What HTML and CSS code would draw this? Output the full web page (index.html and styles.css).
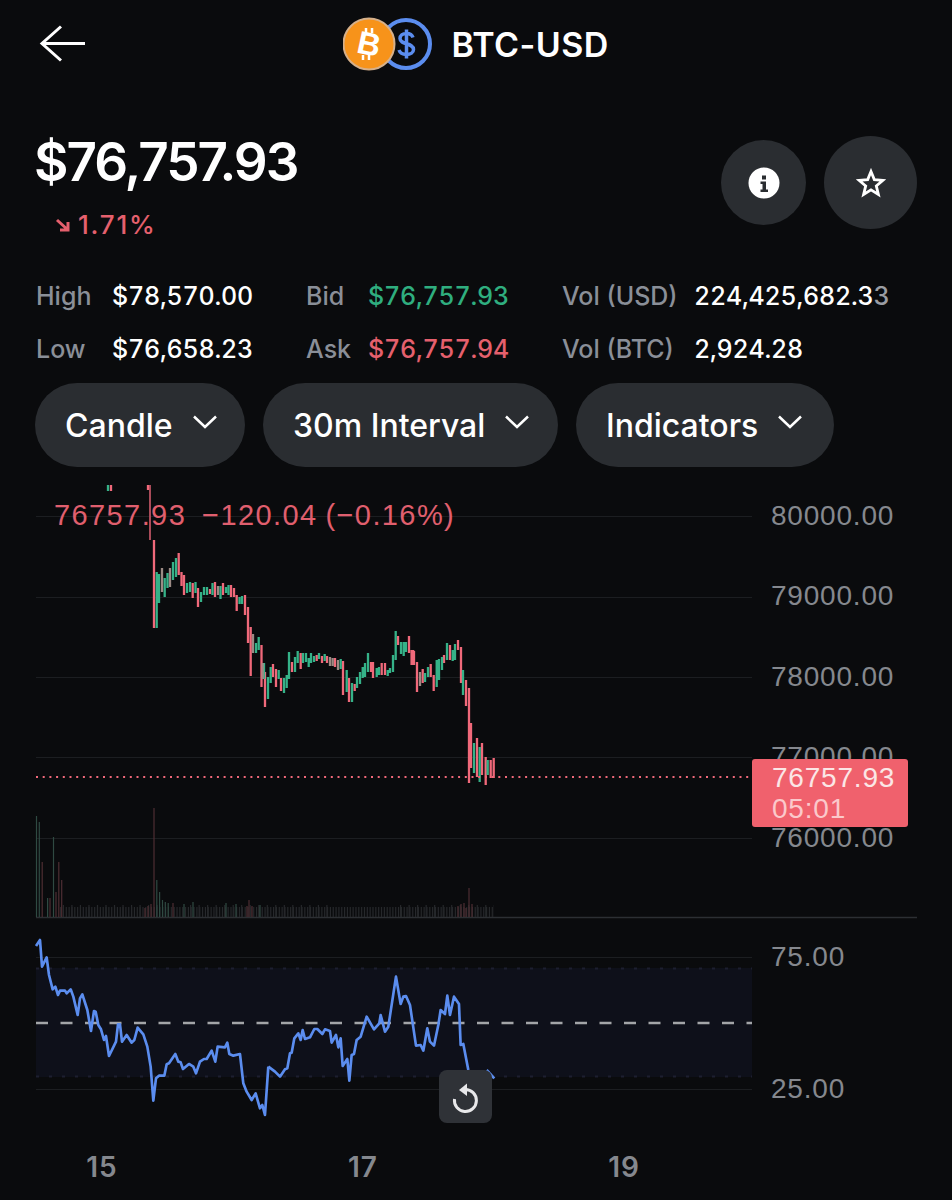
FILE: index.html
```html
<!DOCTYPE html>
<html lang="en">
<head>
<meta charset="utf-8">
<title>BTC-USD</title>
<link rel="stylesheet" href="styles.css">
</head>
<body>
<main class="app">
  <header class="topbar">
    <button class="back" aria-label="Back">
      <svg width="48" height="38" viewBox="0 0 48 38"><path class="line-white" d="M46 18.500H3M22 1.500L3 18.500L22 35.500"/></svg>
    </button>
    <div class="pair">
      <svg class="pair-icon" width="90" height="54" viewBox="0 0 90 54">
        <circle class="usd-ring" cx="63" cy="27" r="24"/>
        <path class="usd-glyph" d="M70 20.500C69 17.500 66.500 16.500 63.500 16.500C59.500 16.500 57 18.500 57 21.500C57 28 70.500 25.500 70.500 32.500C70.500 35.500 67.500 37.500 63.500 37.500C59.500 37.500 57 36 56 33M63.500 12.500V41.500"/>
        <circle class="btc-disc" cx="26" cy="27" r="25.500"/>
        <text class="btc-glyph" x="26" y="38" transform="rotate(12 26 27)">B</text>
        <path class="btc-ticks" d="M23 11V16M29 11V16M20 38V43M26 38V43"/>
      </svg>
      <span class="pair-name">BTC-USD</span>
    </div>
    <span></span>
  </header>

  <section class="summary">
    <div class="quote">
      <div class="price">$76,757.93</div>
      <div class="change">
        <svg width="16" height="14" viewBox="0 0 16 14"><path class="line-red" d="M2 2L13 12M13 4V12H5"/></svg>
        <span>1.71%</span>
      </div>
    </div>
    <div class="actions">
      <button class="round round-info" aria-label="Info">
        <svg width="32" height="32" viewBox="0 0 32 32"><circle class="fill-white" cx="16" cy="16" r="15.500"/><path class="info-cut" d="M14 8.500h4v4h-4zM12.500 14.500h5.500v8h2v2.500h-7.500v-2.500h2v-5.500h-2z"/></svg>
      </button>
      <button class="round round-star" aria-label="Favourite">
        <svg width="30" height="30" viewBox="0 0 30 30"><path class="line-star" d="M15 3.500L18.300 11.600L27 12.300L20.300 17.900L22.400 26.500L15 21.900L7.600 26.500L9.700 17.900L3 12.300L11.700 11.600Z"/></svg>
      </button>
    </div>
  </section>

  <section class="stats">
    <span class="label">High</span><span class="value">$78,570.00</span>
    <span class="label">Bid</span><span class="value up">$76,757.93</span>
    <span class="label">Vol (USD)</span><span class="value">224,425,682.3<span class="fade">3</span></span>
    <span class="label">Low</span><span class="value">$76,658.23</span>
    <span class="label">Ask</span><span class="value down">$76,757.94</span>
    <span class="label">Vol (BTC)</span><span class="value">2,924.28</span>
  </section>

  <nav class="filters">
    <button class="pill pill-candle">Candle <svg width="26" height="16" viewBox="0 0 26 16"><path class="line-white-thin" d="M2 2.500L13 13L24 2.500"/></svg></button>
    <button class="pill pill-interval">30m Interval <svg width="26" height="16" viewBox="0 0 26 16"><path class="line-white-thin" d="M2 2.500L13 13L24 2.500"/></svg></button>
    <button class="pill pill-indicators">Indicators <svg width="26" height="16" viewBox="0 0 26 16"><path class="line-white-thin" d="M2 2.500L13 13L24 2.500"/></svg></button>
  </nav>

  <section class="chart">
    <svg class="chart-svg" width="952" height="720" viewBox="0 480 952 720">
      <path class="grid" d="M36 516.500H752M36 597.500H752M36 677.500H752M36 757.500H752M36 838.500H752M36 957.500H752M36 1089.500H752"/>
      <path class="axis" d="M36 917.500H917"/>

      <rect class="rsi-band" x="36" y="968" width="716" height="109"/>
      <path class="rsi-edge" d="M36 968.500H752M36 1076.500H752"/>
      <path class="rsi-mid" d="M36 1023H752"/>

      <path class="vol-base" d="M60 912H494"/>
      <path class="vol-base2" d="M62.800 911H160M190 911H330M400 911H494"/>
      <path class="vol-green" d="M36.500 917V816M39.300 917V822M53.500 917V837M47.600 917V898M156.800 917V880M159.600 917V892M162.500 917V900M165.300 917V902M168.200 917V903M184 917V904M193 917V902M226 917V903M236 917V904M260 917V905"/>
      <path class="vol-red" d="M42.200 917V862M50 917V898M56 917V892M58.800 917V862M61.700 917V880M154 917V808M151 917V904M148 917V906M145 917V908M173 917V903M247 917V906M249 917V900M252 917V906M469 917V888M458 917V906M461 917V904M464 917V903M466 917V908M472 917V904"/>

      <path class="candle-dim" d="M150 485V540"/>
      <path class="candle-red" d="M154 540V628M111 485V491M148 490V485M178.700 553V575M181.500 572V586M184 575V595M192.700 583V598M198 588V607M210 589V594M215 582V597M223 583V595M231 585V597M234 588V597M236.700 595V611M245 595V615M248 607V643M250.700 627V676M261.500 645V687M265 672V707M273 664V677M276 669V687M281 678V691M292 662V672M300.700 653V669M316.700 655V661M322 656V663M327 656V663M335 658V667M343 661V695M349 678V702M354.700 684V691M371 662V672M373 662V678M381.700 663V675M385 663V675M398 636V645M409 636V653M411.700 650V665M414 651V665M417 662V692M422.700 669V683M430.700 664V677M433.700 675V691M444 655V663M450 645V660M458 640V650M461 647V683M466 680V706M469 688V783M471 723V768M477 738V777M482 743V775M485.700 757V785M490.700 760V778M493.700 758V778"/>
      <path class="candle-red-wide" d="M372 662V672M412.500 650V665M470 723V768"/>
      <path class="candle-green" d="M156.700 572V628M159 574V603M164.700 578V597M167.500 573V588M173 562V580M176 558V577M187 583V593M190 582V592M195.500 582V593M201 592V602M204 587V595M207 587V595M212.500 583V595M220.500 586V599M226 587V593M228.500 585V595M239.500 597V604M242 596V604M256 643V653M258.700 637V650M264 663V679M268 677V699M270.700 667V683M278.700 670V679M284 678V693M286.700 675V688M289 652V679M295 657V672M297.700 651V663M303 653V663M306 653V662M308.700 658V667M311 653V663M314 656V662M319 653V659M324.700 654V661M340.700 659V669M346.700 670V692M352 683V702M357 677V688M360 672V684M362.700 667V678M365 663V677M368 653V672M376.700 668V677M379 667V675M387.700 670V676M390 668V673M393 655V672M395.700 631V660M401 642V654M403.700 642V656M406 642V652M425 673V682M428 667V677M436.700 660V687M439 659V680M442 657V670M447 643V660M452.700 650V661M455 644V660M463 670V695M474 743V773M479.700 747V782M487.700 760V775M108 485V491"/>
      <path class="candle-mute" d="M162 568V592M170 568V587M218 586V595M253 634V653M262.700 663V679M330 657V666M332.700 658V666M338 660V670M420 672V686"/>

      <path class="last-line" d="M36 777H752"/>

      <polyline class="rsi-line" transform="translate(30 930) scale(0.3333)" points="18,48 30,30 36,110 50,82 57,135 68,178 76,170 84,195 90,182 105,182 110,190 122,178 130,200 143,255 150,205 157,193 172,240 183,303 192,243 197,245 205,285 213,298 222,330 228,318 237,378 258,335 264,283 270,283 276,335 290,315 305,338 313,330 323,293 340,313 352,350 362,410 370,512 378,445 387,437 403,437 410,403 417,400 436,372 445,395 452,397 459,417 477,402 490,410 498,430 510,395 522,387 530,387 545,362 556,395 563,350 585,352 592,338 598,372 610,377 630,372 640,460 650,485 665,510 677,490 690,535 697,525 705,555 715,410"/>
      <polyline class="rsi-line" transform="translate(260 930) scale(0.3333)" points="25,410 45,425 60,440 75,418 82,415 90,370 95,368 103,325 115,310 122,330 128,300 135,327 150,322 163,297 172,297 187,312 195,298 210,303 215,338 228,315 235,352 242,325 248,408 262,387 268,452 275,375 282,372 290,330 302,320 320,260 342,298 358,280 362,255 375,305 385,290 408,140 422,222 430,200 438,198 450,225 468,347 482,345 490,362 502,295 510,335 522,347 535,285 542,240 555,252 562,197 570,255 582,200 597,222 602,345 610,342 625,420"/>
      <polyline class="rsi-line" transform="translate(260 930) scale(0.3333)" points="680,420 703,445"/>

      <text class="legend" x="54" y="525">76757.93  −120.04 (−0.16%)</text>

      <text class="tick" x="771" y="525">80000.00</text>
      <text class="tick" x="771" y="605">79000.00</text>
      <text class="tick" x="771" y="686">78000.00</text>
      <text class="tick" x="771" y="766">77000.00</text>
      <text class="tick" x="771" y="847">76000.00</text>
      <text class="tick" x="771" y="966">75.00</text>
      <text class="tick" x="771" y="1098">25.00</text>

      <rect class="tag" x="752" y="759" width="156" height="68" rx="3"/>
      <text class="tag-price" x="772" y="787">76757.93</text>
      <text class="tag-time" x="772" y="818">05:01</text>

      <text class="day" x="102" y="1177">15</text>
      <text class="day" x="363" y="1177">17</text>
      <text class="day" x="624" y="1177">19</text>

      <rect class="reset" x="439" y="1070" width="53" height="53" rx="8"/>
      <path class="reset-arc" d="M465 1089.500A11 11 0 1 1 454.500 1099"/>
      <path class="reset-head" d="M467 1083.500V1096L459 1090Z"/>
    </svg>
  </section>
</main>
</body>
</html>
```
FILE: styles.css
```css
* { box-sizing: border-box; }
html, body { margin: 0; padding: 0; background: #0a0b0d; }
body { font-family: "Inter", "Liberation Sans", sans-serif; color: #fff; }
button { font: inherit; color: inherit; border: 0; padding: 0; background: none; }
svg { display: block; }

.app { width: 952px; height: 1200px; overflow: hidden; display: flex; flex-direction: column; background: #0a0b0d; }

.topbar { height: 90px; display: grid; grid-template-columns: 1fr auto 1fr; align-items: center; padding: 0 39px 2px; }
.back { width: 48px; height: 38px; }
.pair { display: flex; align-items: center; gap: 18px; }
.pair-name { font-size: 34px; font-weight: 600; letter-spacing: 0.400px; }
.usd-ring { fill: none; stroke: #5b8def; stroke-width: 4; }
.usd-glyph { fill: none; stroke: #5b8def; stroke-width: 3.500; }
.btc-disc { fill: #f7931a; stroke: #d6b08a; stroke-width: 2; }
.btc-glyph { fill: #fff; font-family: "Liberation Sans", sans-serif; font-size: 32px; font-weight: 700; text-anchor: middle; }
.btc-ticks { stroke: #fff; stroke-width: 2.500; }

.line-white { fill: none; stroke: #fff; stroke-width: 3; }
.line-white-thin { fill: none; stroke: #fff; stroke-width: 2.500; }
.line-red { fill: none; stroke: #e5606d; stroke-width: 3; }
.line-star { fill: none; stroke: #fff; stroke-width: 2.800; stroke-linejoin: miter; }
.fill-white { fill: #fff; }
.info-cut { fill: #2a2d31; }

.summary { height: 179px; padding: 46px 35px 0 36px; display: flex; justify-content: space-between; align-items: flex-start; }
.quote { display: flex; flex-direction: column; }
.price { margin: -6px 0 0 -2px; font-size: 53px; line-height: 64px; font-weight: 600; letter-spacing: -2px; }
.change { margin: 16px 0 0 19px; display: flex; align-items: center; gap: 7px; font-size: 26px; line-height: 30px; font-weight: 500; letter-spacing: 1.800px; color: #e5606d; }
.actions { display: flex; align-items: center; gap: 18px; }
.round { display: flex; align-items: center; justify-content: center; background: #2a2d31; border-radius: 50%; }
.round-info { width: 85px; height: 85px; }
.round-star { width: 93px; height: 93px; }

.stats { display: grid; grid-template-columns: 77px 193px 63px 193px 133px auto; grid-auto-rows: 53px; align-items: center; padding: 0 0 0 36px; font-size: 25px; height: 106px; }
.label { color: #8a8f98; font-weight: 500; }
.value { margin-left: -1px; color: #fff; font-weight: 500; font-variant-numeric: tabular-nums; letter-spacing: -0.200px; white-space: nowrap; }
.value.up { color: #2fae7f; }
.value.down { color: #e5606d; }
.fade { color: #9a9da3; }

.filters { display: flex; gap: 18px; padding: 0 0 0 35px; margin-top: 8px; }
.pill { height: 84px; display: flex; align-items: center; border-radius: 42px; background: #2a2d31; font-size: 32px; font-weight: 500; padding-left: 30px; white-space: nowrap; }
.pill svg { margin-top: -6px; }
.pill-candle { width: 210px; gap: 19px; }
.pill-interval { width: 295px; gap: 19px; }
.pill-indicators { width: 258px; gap: 19px; }

.chart { height: 720px; margin-top: 13px; }
.chart-svg { width: 952px; height: 720px; }

.grid { fill: none; stroke: #1c1e21; stroke-width: 1; }
.axis { fill: none; stroke: #2c2f33; stroke-width: 1.500; }
.rsi-band { fill: #0e101a; }
.rsi-edge { fill: none; stroke: #1d1f30; stroke-width: 2; stroke-dasharray: 3 10; }
.rsi-mid { fill: none; stroke: #a3a5a8; stroke-width: 2.300; stroke-dasharray: 12 12.500; }
.vol-base { fill: none; stroke: #26282b; stroke-width: 10; stroke-dasharray: 1.200 1.640; }
.vol-base2 { fill: none; stroke: #26282b; stroke-width: 12; stroke-dasharray: 1.200 7.320; }
.vol-green { fill: none; stroke: #2f4a42; stroke-width: 1.200; }
.vol-red { fill: none; stroke: #4e2e33; stroke-width: 1.200; }
.candle-red { fill: none; stroke: #f0697a; stroke-width: 2.300; }
.candle-red-wide { fill: none; stroke: #f0697a; stroke-width: 3.500; }
.candle-dim { fill: none; stroke: #a94b59; stroke-width: 2; }
.candle-green { fill: none; stroke: #35b288; stroke-width: 2.300; }
.candle-mute { fill: none; stroke: #9c8a84; stroke-width: 2.300; }
.last-line { fill: none; stroke: #f0697a; stroke-width: 2; stroke-dasharray: 2 4.700; }
.rsi-line { fill: none; stroke: #5b8def; stroke-width: 8; stroke-linejoin: round; }

.legend, .tick, .tag-price, .tag-time { font-family: "Liberation Sans", sans-serif; font-size: 28px; letter-spacing: 0.800px; white-space: pre; }
.legend { fill: #e05f6e; font-size: 29px; letter-spacing: 1.400px; word-spacing: -1.500px; }
.tick { fill: #85888e; }
.tag { fill: #f0616d; }
.tag-price { fill: #fbe6e6; }
.tag-time { fill: #fbc9cb; }
.day { fill: #85888e; font-family: "Inter", sans-serif; font-size: 28px; font-weight: 600; letter-spacing: 1px; text-anchor: middle; }
.reset { fill: #2f3237; }
.reset-arc { fill: none; stroke: #e8e8ea; stroke-width: 3; }
.reset-head { fill: #e8e8ea; }
```
